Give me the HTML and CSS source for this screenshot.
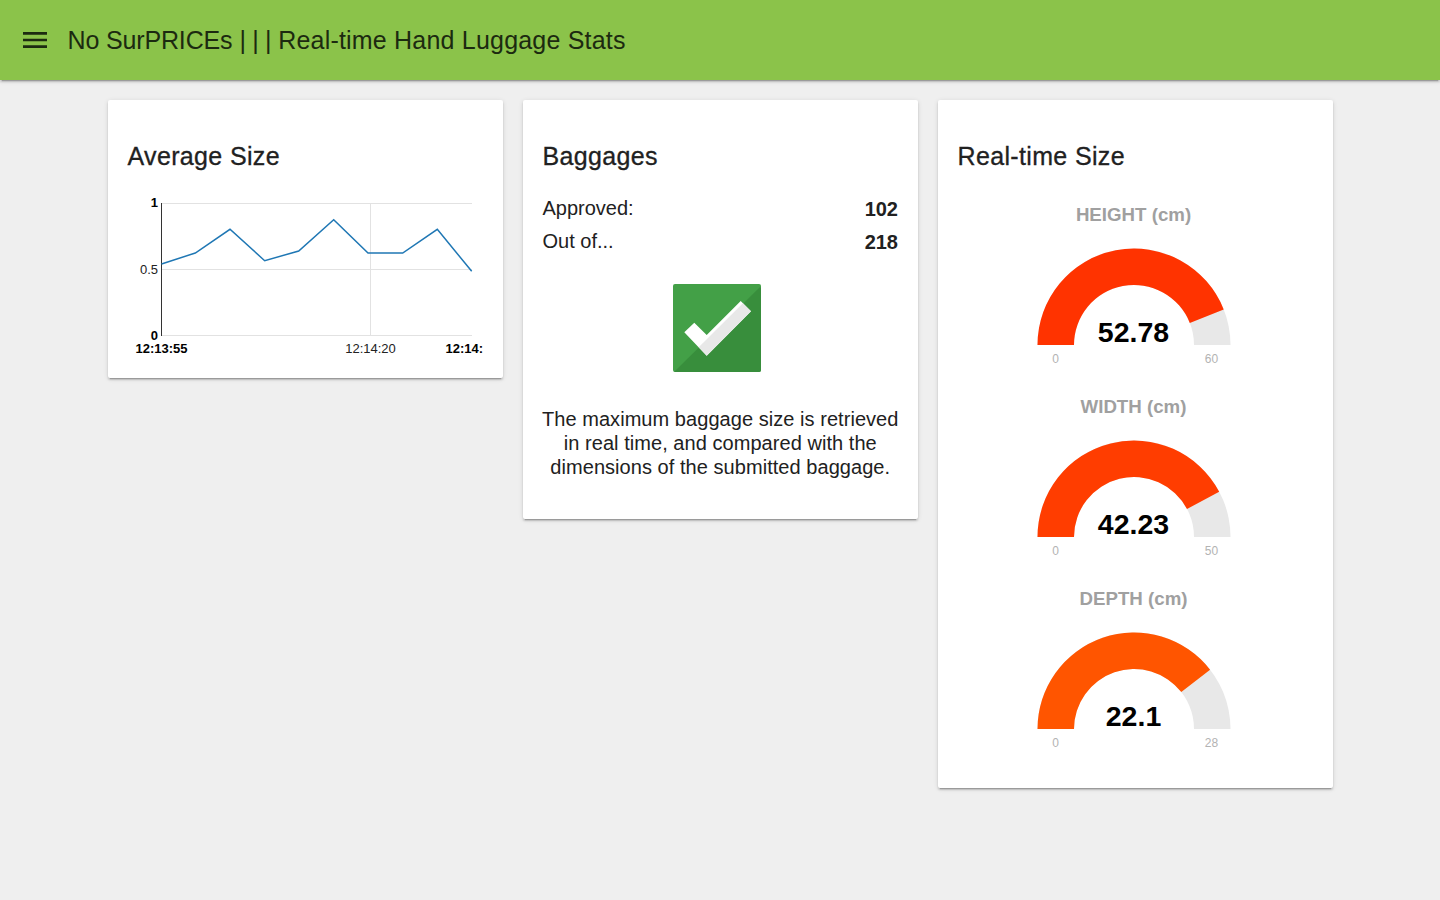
FILE: index.html
```html
<!DOCTYPE html>
<html lang="en">
<head>
<meta name="viewport" content="width=device-width, initial-scale=1">
<title>No SurPRICEs</title>
<link rel="stylesheet" href="styles.css">
</head>
<body>
<header class="topbar">
    <svg class="menu-icon" width="32" height="32" viewBox="0 0 24 24"><path d="M3 18h18v-2H3v2zm0-5h18v-2H3v2zm0-7v2h18V6H3z"/></svg>
    <span class="topbar-title"><span class="title-brand">No SurPRICEs</span> <span class="title-pipes">| | |</span> <span class="title-tag">Real-time Hand Luggage Stats</span></span>
</header>

<main class="cards">
    <section class="card card-chart">
        <h2 class="card-title">Average Size</h2>
        <svg class="chart" width="395" height="175" viewBox="0 0 395 175">
            <g class="grid">
                <line x1="53" y1="19.5" x2="364" y2="19.5"/>
                <line x1="53" y1="85.5" x2="364" y2="85.5"/>
                <line x1="53" y1="151.5" x2="364" y2="151.5"/>
                <line x1="262.5" y1="19" x2="262.5" y2="152"/>
            </g>
            <line class="axis" x1="53.5" y1="19" x2="53.5" y2="152"/>
            <polyline class="series" points="53.5,80 87.3,69 122,45.3 156.7,76.7 190.7,67 225.7,35.7 260,69 294.7,69 329.3,45.3 363.7,87.3"/>
            <text class="tick tick-bold" x="50" y="23" text-anchor="end">1</text>
            <text class="tick" x="50" y="90" text-anchor="end">0.5</text>
            <text class="tick tick-bold" x="50" y="156" text-anchor="end">0</text>
            <text class="tick tick-bold" x="53.5" y="169" text-anchor="middle">12:13:55</text>
            <text class="tick" x="262.5" y="169" text-anchor="middle">12:14:20</text>
            <text class="tick tick-bold" x="337.5" y="169">12:14:</text>
        </svg>
    </section>

    <section class="card card-bags">
        <h2 class="card-title">Baggages</h2>
        <div class="stat-row"><span>Approved:</span><strong>102</strong></div>
        <div class="stat-row"><span>Out of...</span><strong>218</strong></div>
        <svg class="check" width="88" height="88" viewBox="0 0 88 88">
            <rect width="88" height="88" rx="2" fill="#43a047"/>
            <path d="M87 3 88 4V86a2 2 0 0 1-2 2H1z" fill="#388e3c"/>
            <path d="M11.3 48.3 21.3 38.7 33.7 51 67.7 17 78 27.3 33.7 71.7z" fill="#fff"/>
            <path d="M25.7 63.3 69.9 19.2 78 27.3 33.7 71.7z" fill="#e8e8e8"/>
        </svg>
        <p class="bags-note">The maximum baggage size is retrieved in real time, and compared with the dimensions of the submitted baggage.</p>
    </section>

    <section class="card card-gauges">
        <h2 class="card-title">Real-time Size</h2>
        <div class="gauge">
            <div class="gauge-label">HEIGHT (cm)</div>
            <svg class="gauge-svg" width="200" height="130" viewBox="-100 -100 200 130">
                <path class="gauge-bg" d="M-96.5 0A96.5 96.5 0 0 1 96.5 0H60A60 60 0 0 0-60 0z"/>
                <path fill="#ff3300" d="M-96.5 0A96.5 96.5 0 0 1 89.7-35.6L55.8-22.1A60 60 0 0 0-60 0z"/>
                <text class="gauge-value" x="-0.5" y="-3" text-anchor="middle">52.78</text>
                <text class="gauge-range" x="-78.5" y="18" text-anchor="middle">0</text>
                <text class="gauge-range" x="77.5" y="18" text-anchor="middle">60</text>
            </svg>
        </div>
        <div class="gauge">
            <div class="gauge-label">WIDTH (cm)</div>
            <svg class="gauge-svg" width="200" height="130" viewBox="-100 -100 200 130">
                <path class="gauge-bg" d="M-96.5 0A96.5 96.5 0 0 1 96.5 0H60A60 60 0 0 0-60 0z"/>
                <path fill="#ff3d00" d="M-96.5 0A96.5 96.5 0 0 1 85.2-45.3L53-28.1A60 60 0 0 0-60 0z"/>
                <text class="gauge-value" x="-0.5" y="-3" text-anchor="middle">42.23</text>
                <text class="gauge-range" x="-78.5" y="18" text-anchor="middle">0</text>
                <text class="gauge-range" x="77.5" y="18" text-anchor="middle">50</text>
            </svg>
        </div>
        <div class="gauge">
            <div class="gauge-label">DEPTH (cm)</div>
            <svg class="gauge-svg" width="200" height="130" viewBox="-100 -100 200 130">
                <path class="gauge-bg" d="M-96.5 0A96.5 96.5 0 0 1 96.5 0H60A60 60 0 0 0-60 0z"/>
                <path fill="#ff5500" d="M-96.5 0A96.5 96.5 0 0 1 76.1-59.3L47.3-36.9A60 60 0 0 0-60 0z"/>
                <text class="gauge-value" x="-0.5" y="-3" text-anchor="middle">22.1</text>
                <text class="gauge-range" x="-78.5" y="18" text-anchor="middle">0</text>
                <text class="gauge-range" x="77.5" y="18" text-anchor="middle">28</text>
            </svg>
        </div>
    </section>
</main>
</body>
</html>
```

FILE: styles.css
```css
body {
    margin: 0;
    background-color: #efefef;
    color: #212121;
    font-family: "Liberation Sans", Arial, sans-serif;
}

.topbar {
    display: flex;
    align-items: center;
    height: 80px;
    padding-left: 19px;
    gap: 16.5px;
    background-color: #8bc34a;
    box-shadow: 0 2px 2px rgba(0, 0, 0, 0.14), 0 3px 1px -2px rgba(0, 0, 0, 0.2), 0 1px 5px rgba(0, 0, 0, 0.12);
}
.menu-icon {
    fill: #1c2a10;
}
.topbar-title {
    font-size: 25px;
    color: #1c2a10;
}
.title-brand {
    letter-spacing: -0.15px;
}
.title-pipes {
    letter-spacing: -0.3px;
}
.title-tag {
    letter-spacing: 0.2px;
}

.cards {
    display: flex;
    align-items: flex-start;
    gap: 20px;
    padding: 20px 0 20px 108px;
}
.card {
    width: 395px;
    box-sizing: border-box;
    background-color: #fff;
    border-radius: 2px;
    box-shadow: 0 2px 2px rgba(0, 0, 0, 0.14), 0 3px 1px -2px rgba(0, 0, 0, 0.2), 0 1px 5px rgba(0, 0, 0, 0.12);
}
.card-title {
    margin: 0;
    padding: 40px 19.5px 0;
    font-size: 25px;
    line-height: 32px;
    font-weight: normal;
    letter-spacing: 0.35px;
    -webkit-text-stroke: 0.3px #212121;
}

.card-chart {
    height: 278px;
}
.chart {
    display: block;
    margin-top: 12px;
}
.grid line {
    stroke: #e2e2e2;
    stroke-width: 1;
}
.axis {
    stroke: #333;
    stroke-width: 1;
}
.series {
    fill: none;
    stroke: #1f77b4;
    stroke-width: 1.5;
}
.tick {
    font-size: 13px;
    fill: #222;
}
.tick-bold {
    font-weight: bold;
    fill: #000;
}

.card-bags {
    height: 419px;
}
.stat-row {
    display: flex;
    justify-content: space-between;
    height: 33px;
    padding: 0 20px 0 19.5px;
    font-size: 20px;
    line-height: 33px;
}
.stat-row:first-of-type {
    margin-top: 20px;
}
.stat-row strong {
    padding-top: 1px;
}
.check {
    display: block;
    margin: 26px 0 0 150px;
}
.bags-note {
    margin: 35px 18px 0 17.5px;
    font-size: 20px;
    line-height: 24px;
    letter-spacing: 0.05px;
    text-align: center;
}

.card-gauges {
    height: 688px;
}
.gauge {
    margin-top: 14px;
    height: 178px;
}
.gauge:first-of-type {
    margin-top: 32px;
}
.gauge-label {
    text-align: center;
    padding-right: 4px;
    font-size: 18.7px;
    font-weight: bold;
    line-height: 22px;
    color: #a0a0a0;
}
.gauge-svg {
    display: block;
    margin: 19px 0 0 95.5px;
}
.gauge-bg {
    fill: #e8e8e8;
}
.gauge-value {
    font-size: 28.5px;
    font-weight: bold;
    fill: #000;
}
.gauge-range {
    font-size: 12px;
    fill: #b3b3b3;
}
```
